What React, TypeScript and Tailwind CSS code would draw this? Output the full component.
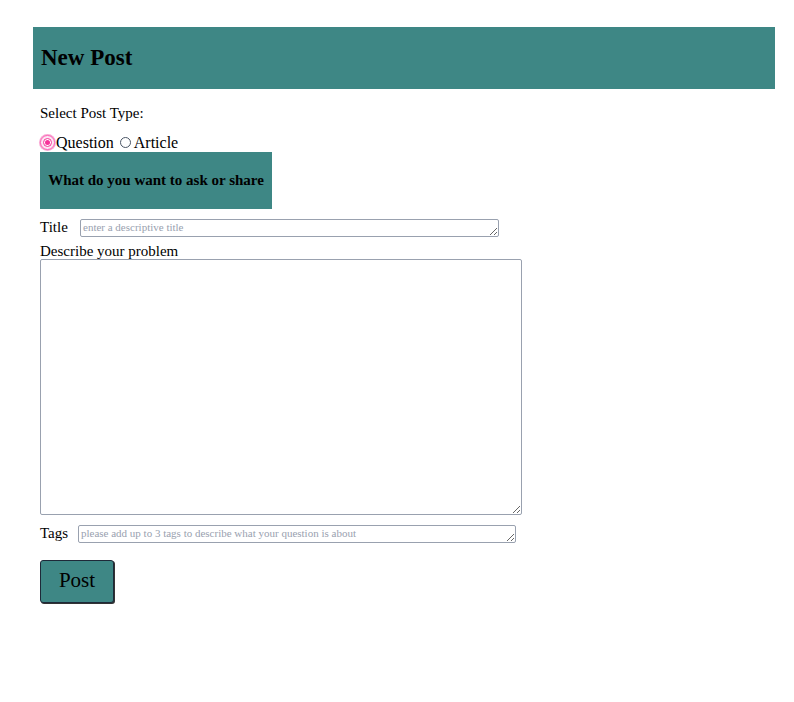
import React, { useState } from 'react';

const serif = { fontFamily: '"Liberation Serif", "DejaVu Serif", serif' };

const Radio: React.FC<{ checked: boolean; label: string; onClick: () => void }> = ({ checked, label, onClick }) => (
  <label onClick={onClick} className="inline-flex items-center cursor-pointer">
    {checked ? (
      <span className="w-[15px] h-[15px] rounded-full bg-pink-100 border border-pink-400 flex items-center justify-center shadow-[0_0_0_1px_#f9a8d4]">
        <span className="w-[9px] h-[9px] rounded-full border border-pink-500 flex items-center justify-center bg-white">
          <span className="w-[5px] h-[5px] rounded-full bg-pink-500" />
        </span>
      </span>
    ) : (
      <span className="w-[11px] h-[11px] rounded-full border border-gray-600 mx-[2px] bg-white" />
    )}
    <span className="ml-[1px]">{label}</span>
  </label>
);

const App: React.FC = () => {
  const [postType, setPostType] = useState('question');

  return (
    <div className="min-h-[702px] bg-white text-black pt-[27px] pl-[33px]" style={serif}>
      {/* Header */}
      <div className="w-[742px] h-[62px] bg-[#3e8785] flex items-center px-[8px]">
        <h1 className="text-[23px] font-bold">New Post</h1>
      </div>

      <div className="pl-[7px]">
        <p className="text-[15px] mt-[13px]">Select Post Type:</p>

        <div className="flex items-center gap-[4px] text-[16px] mt-[9px] leading-[18px]">
          <Radio checked={postType === 'question'} label="Question" onClick={() => setPostType('question')} />
          <Radio checked={postType === 'article'} label="Article" onClick={() => setPostType('article')} />
        </div>

        <div className="w-[232px] h-[57px] bg-[#3e8785] flex items-center justify-center">
          <span className="text-[15px] font-bold">What do you want to ask or share</span>
        </div>

        {/* Title */}
        <div className="flex items-center h-[18px] mt-[10px]">
          <span className="text-[15px] w-[40px]">Title</span>
          <textarea
            rows={1}
            placeholder="enter a descriptive title"
            className="w-[419px] h-[18px] border border-gray-400 rounded-[2px] text-[11px] leading-[14px] px-[2px] py-0 placeholder:text-gray-400 overflow-hidden"
          />
        </div>

        <p className="text-[15px] leading-[16px] mt-[6px]">Describe your problem</p>
        <textarea className="block w-[482px] h-[256px] border border-gray-400 rounded-[2px]" />

        {/* Tags */}
        <div className="flex items-center h-[18px] mt-[10px]">
          <span className="text-[15px] w-[38px]">Tags</span>
          <textarea
            rows={1}
            placeholder="please add up to 3 tags to describe what your question is about"
            className="w-[438px] h-[18px] border border-gray-400 rounded-[2px] text-[11px] leading-[14px] px-[2px] py-0 placeholder:text-gray-400 overflow-hidden"
          />
        </div>

        <button className="block mt-[17px] w-[74px] h-[43px] bg-[#3e8785] border border-gray-800 rounded-[3px] shadow-[1px_1px_0_#333] text-[21px]">
          Post
        </button>
      </div>
    </div>
  );
};

export default App;
